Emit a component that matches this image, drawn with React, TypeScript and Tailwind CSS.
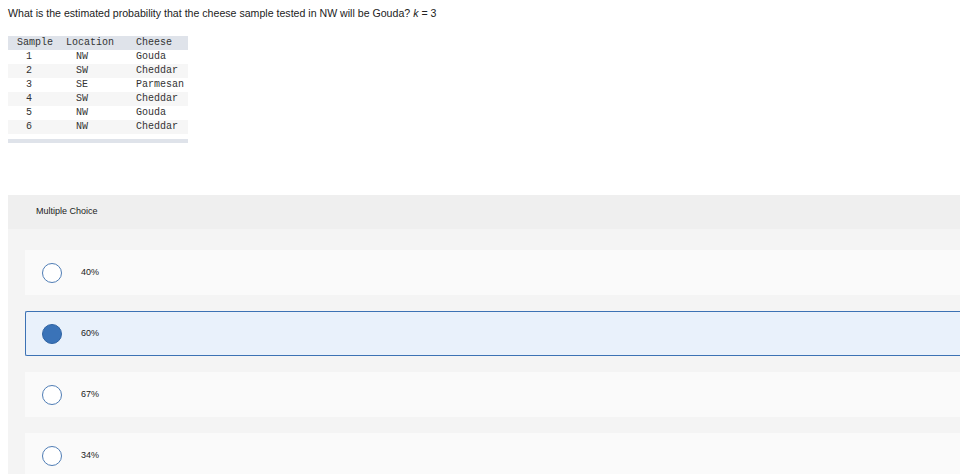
const rows = [
  { sample: "1", location: "NW", cheese: "Gouda" },
  { sample: "2", location: "SW", cheese: "Cheddar" },
  { sample: "3", location: "SE", cheese: "Parmesan" },
  { sample: "4", location: "SW", cheese: "Cheddar" },
  { sample: "5", location: "NW", cheese: "Gouda" },
  { sample: "6", location: "NW", cheese: "Cheddar" },
];

const choices = [
  { label: "40%", selected: false },
  { label: "60%", selected: true },
  { label: "67%", selected: false },
  { label: "34%", selected: false },
];

function Radio({ checked }: { checked: boolean }) {
  return (
    <span
      className={
        checked
          ? "w-5 h-5 rounded-full bg-[#3a73b8] border border-[#2f63a3] shrink-0"
          : "w-5 h-5 rounded-full bg-white border-[1.5px] border-[#4f7db5] shrink-0"
      }
    />
  );
}

export default function App() {
  return (
    <div className="w-[960px] h-[474px] overflow-hidden bg-white text-[#222] font-['Liberation_Sans',Arial,sans-serif]">
      <p className="pl-2 pt-[7px] text-[10.6px] leading-[13px]">
        What is the estimated probability that the cheese sample tested in NW will be Gouda?{" "}
        <i>k</i> = 3
      </p>

      <div className="ml-2 mt-[16px] w-[180px] font-['Liberation_Mono',monospace] text-[10px] leading-[14px] text-[#333]">
        <div className="grid grid-cols-[56px_70px_54px] bg-[#dfe3ea]">
          <span className="pl-[9px]">Sample</span>
          <span className="pl-[2px]">Location</span>
          <span className="pl-[2px]">Cheese</span>
        </div>
        {rows.map((r, i) => (
          <div
            key={r.sample}
            className={`grid grid-cols-[56px_70px_54px] ${i % 2 === 1 ? "bg-[#f6f6f6]" : "bg-white"}`}
          >
            <span className="pl-[18px]">{r.sample}</span>
            <span className="pl-[12px]">{r.location}</span>
            <span className="pl-[2px]">{r.cheese}</span>
          </div>
        ))}
        <div className="mt-[5px] h-[4px] bg-[#dfe3ea]" />
      </div>

      <div className="ml-2 mt-[52px] bg-[#f4f4f4]">
        <div className="h-[34px] bg-[#efefef] flex items-center pl-7 text-[9px]">
          Multiple Choice
        </div>
        <div className="pl-[17px] pt-[21px] flex flex-col gap-4">
          {choices.map((c) => (
            <div
              key={c.label}
              className={
                c.selected
                  ? "h-[45px] flex items-center gap-[19px] pl-4 bg-[#e9f1fb] border border-r-0 border-[#3c72b4] rounded-l-[2px]"
                  : "h-[45px] flex items-center gap-[19px] pl-[17px] bg-[#fafafa]"
              }
            >
              <Radio checked={c.selected} />
              <span className="text-[9px]">{c.label}</span>
            </div>
          ))}
        </div>
      </div>
    </div>
  );
}
